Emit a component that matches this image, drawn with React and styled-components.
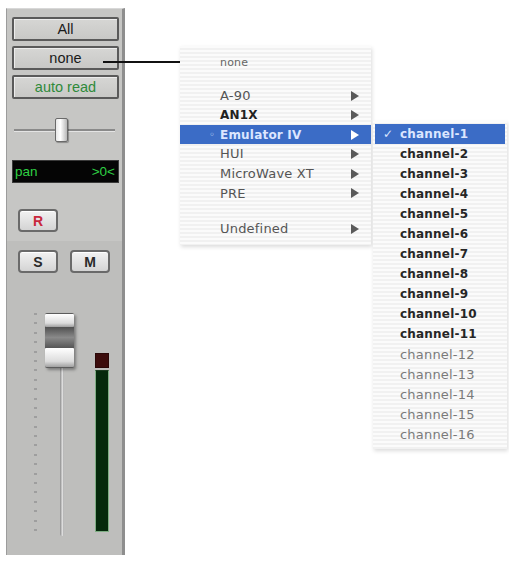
import React from "react";
import styled, { createGlobalStyle } from "styled-components";

const Global = createGlobalStyle`
  html, body { margin: 0; padding: 0; background: #ffffff; }
  body { font-family: "DejaVu Sans", "Liberation Sans", sans-serif; }
`;

const Page = styled.div`
  position: relative;
  width: 509px;
  height: 562px;
  background: #ffffff;
  overflow: hidden;
`;

const Strip = styled.div`
  margin: 8px 0 0 6px;
  width: 119px;
  height: 547px;
  box-sizing: border-box;
  border-left: 1px solid #9c9c9c;
  border-right: 3px solid #8e8e8e;
  border-top: 1px solid #d8d8d8;
  background: #c6c6c4;
  display: flex;
  flex-direction: column;
`;

const TopSection = styled.div`
  padding: 8px 3px 0 5px;
  display: flex;
  flex-direction: column;
  height: 232px;
  box-sizing: border-box;
`;

const BottomSection = styled.div`
  flex: 1;
  background: #bebebc;
  padding: 9px 3px 0 5px;
  display: flex;
  flex-direction: column;
`;

const StripButton = styled.div`
  height: 24px;
  box-sizing: border-box;
  border: 2px solid #5a5a5a;
  border-radius: 2px;
  background: linear-gradient(#d6d6d4, #c8c8c6);
  box-shadow: inset 1px 1px 0 #ececec;
  margin-top: ${(p) => p.$mt || 0}px;
  display: flex;
  align-items: center;
  justify-content: center;
  font-family: "Liberation Sans", Arial, sans-serif;
  font-size: 14.5px;
  color: ${(p) => p.$color || "#1a1a1a"};
`;

const PanSlider = styled.div`
  position: relative;
  margin-top: 19px;
  height: 24px;
  display: flex;
  align-items: center;
`;

const PanTrack = styled.div`
  flex: 1;
  height: 2px;
  background: #8a8a8a;
  border-bottom: 1px solid #e4e4e4;
  margin: 0 4px 0 2px;
`;

const PanThumb = styled.div`
  position: absolute;
  left: 43px;
  top: 0;
  width: 13px;
  height: 24px;
  box-sizing: border-box;
  border: 1px solid #6a6a6a;
  border-radius: 2px;
  background: linear-gradient(90deg, #e8e8e8 0%, #ffffff 40%, #b8b8b8 100%);
  box-shadow: 1px 1px 1px rgba(0, 0, 0, 0.3);
`;

const PanDisplay = styled.div`
  margin-top: 18px;
  height: 23px;
  background: #050505;
  border: 1px solid #3a3a3a;
  box-sizing: border-box;
  display: flex;
  align-items: center;
  justify-content: space-between;
  padding: 0 3px 0 2px;
  font-family: "Liberation Sans", Arial, sans-serif;
  font-size: 13.5px;
  color: #2fd044;
`;

const SmallButton = styled.div`
  width: 40px;
  height: 23px;
  box-sizing: border-box;
  border: 2px solid #6a6a6a;
  border-radius: 4px;
  background: linear-gradient(#f2f2f2, #d4d4d4);
  box-shadow: inset 0 1px 0 #ffffff;
  display: flex;
  align-items: center;
  justify-content: center;
  font-family: "Liberation Sans", Arial, sans-serif;
  font-weight: bold;
  font-size: 14px;
  color: ${(p) => p.$color || "#2a2a2a"};
`;

const ButtonRow = styled.div`
  display: flex;
  gap: 12px;
  padding-left: 6px;
  margin-top: ${(p) => p.$mt || 0}px;
`;

const FaderArea = styled.div`
  position: relative;
  margin-top: 40px;
  height: 230px;
  display: flex;
`;

const Scale = styled.div`
  margin-left: 22px;
  width: 4px;
  height: 218px;
  display: flex;
  flex-direction: column;
  justify-content: space-between;
`;

const Tick = styled.div`
  width: 3px;
  height: 2px;
  background: #9e9e9e;
`;

const Track = styled.div`
  margin-left: 22px;
  margin-top: 6px;
  width: 4px;
  height: 217px;
  background: linear-gradient(90deg, #8c8c8c, #e0e0e0 60%, #a8a8a8);
  border-radius: 2px;
`;

const FaderCap = styled.div`
  position: absolute;
  left: 33px;
  top: 0;
  width: 29px;
  height: 55px;
  border-radius: 2px;
  background: #5c5c5c;
  box-shadow: 2px 2px 3px rgba(0, 0, 0, 0.35);
  display: flex;
  flex-direction: column;
  justify-content: space-between;
  padding: 1px 0;
  box-sizing: border-box;
`;

const CapPart = styled.div`
  height: ${(p) => p.$h}px;
  background: linear-gradient(#ffffff, #dcdcdc 70%, #a0a0a0);
  border-radius: 1px;
`;

const CapMid = styled.div`
  flex: 1;
  background: linear-gradient(#505050, #8a8a8a 50%, #555);
`;

const Meter = styled.div`
  margin-left: 31px;
  margin-top: 40px;
  width: 14px;
  height: 179px;
  display: flex;
  flex-direction: column;
  gap: 2px;
`;

const Clip = styled.div`
  height: 13px;
  background: #3c0c0c;
  border: 1px solid #2a0808;
`;

const MeterBar = styled.div`
  flex: 1;
  background: #062a0c;
  border: 1px solid #7fae84;
  border-top-color: #1a3a1e;
`;

const Callout = styled.div`
  position: absolute;
  left: 103px;
  top: 61px;
  width: 102px;
  height: 2px;
  background: #111;
`;

const Menu = styled.div`
  position: absolute;
  left: ${(p) => p.$left}px;
  top: ${(p) => p.$top}px;
  width: ${(p) => p.$width}px;
  padding: ${(p) => p.$pad};
  box-sizing: border-box;
  background: repeating-linear-gradient(#fbfbfb 0 2px, #f1f1f1 2px 4px);
  box-shadow: 1px 2px 4px rgba(0, 0, 0, 0.14);
  display: flex;
  flex-direction: column;
`;

const Item = styled.div`
  position: relative;
  height: ${(p) => p.$h || 20}px;
  display: flex;
  align-items: center;
  padding-left: ${(p) => p.$pl}px;
  padding-right: 12px;
  font-size: ${(p) => p.$fs || (p.$bold ? 12 : 13)}px;
  font-weight: ${(p) => (p.$bold ? "bold" : "normal")};
  color: ${(p) => (p.$sel ? "#dce6ff" : p.$c || "#555")};
  background: ${(p) => (p.$sel ? "#3b6cc6" : "transparent")};
  letter-spacing: 0.2px;
`;

const Label = styled.span`
  flex: 1;
`;

const Mark = styled.span`
  position: absolute;
  left: ${(p) => p.$x}px;
  font-size: ${(p) => p.$fs || 11}px;
  font-weight: normal;
`;

const Arrow = styled.span`
  width: 0;
  height: 0;
  border-top: 5px solid transparent;
  border-bottom: 5px solid transparent;
  border-left: 8px solid ${(p) => (p.$sel ? "#ffffff" : "#5a5a5a")};
`;

const Gap = styled.div`
  height: ${(p) => p.$h}px;
`;

const devices = [
  { name: "A-90" },
  { name: "AN1X", bold: true, c: "#222" },
  { name: "Emulator IV", bold: true, sel: true },
  { name: "HUI" },
  { name: "MicroWave XT" },
  { name: "PRE" },
];

const channels = Array.from({ length: 16 }, (_, i) => i + 1);

export default function App() {
  const ticks = Array.from({ length: 24 }, (_, i) => i);
  return (
    <Page>
      <Global />
      <Strip>
        <TopSection>
          <StripButton>All</StripButton>
          <StripButton $mt={5}>none</StripButton>
          <StripButton $mt={5} $color="#2f8a3a">auto read</StripButton>
          <PanSlider>
            <PanTrack />
            <PanThumb />
          </PanSlider>
          <PanDisplay>
            <span>pan</span>
            <span>&gt;0&lt;</span>
          </PanDisplay>
          <ButtonRow $mt={26}>
            <SmallButton $color="#c8283c">R</SmallButton>
          </ButtonRow>
        </TopSection>
        <BottomSection>
          <ButtonRow>
            <SmallButton>S</SmallButton>
            <SmallButton>M</SmallButton>
          </ButtonRow>
          <FaderArea>
            <Scale>
              {ticks.map((t) => (
                <Tick key={t} />
              ))}
            </Scale>
            <Track />
            <FaderCap>
              <CapPart $h={13} />
              <CapMid />
              <CapPart $h={19} />
            </FaderCap>
            <Meter>
              <Clip />
              <MeterBar />
            </Meter>
          </FaderArea>
        </BottomSection>
      </Strip>

      <Callout />

      <Menu $left={180} $top={46} $width={191} $pad="6px 0 6px 0">
        <Item $pl={40} $c="#666" $fs={11}>
          <Label>none</Label>
        </Item>
        <Gap $h={14} />
        {devices.map((d) => (
          <Item key={d.name} $pl={40} $bold={d.bold} $sel={d.sel} $c={d.c} $h={d.sel ? 19 : 19.6}>
            {d.sel && <Mark $x={29} $fs={10}>◦</Mark>}
            <Label>{d.name}</Label>
            <Arrow $sel={d.sel} />
          </Item>
        ))}
        <Gap $h={16} />
        <Item $pl={40}>
          <Label>Undefined</Label>
          <Arrow />
        </Item>
      </Menu>

      <Menu $left={373} $top={121} $width={134} $pad="3px 2px 5px 2px">
        {channels.map((n) => (
          <Item
            key={n}
            $pl={25}
            $bold={n <= 11}
            $sel={n === 1}
            $c={n <= 11 ? "#262626" : "#7a7a7a"}
          >
            {n === 1 && <Mark $x={8} $fs={12}>✓</Mark>}
            <Label>channel-{n}</Label>
          </Item>
        ))}
      </Menu>
    </Page>
  );
}
